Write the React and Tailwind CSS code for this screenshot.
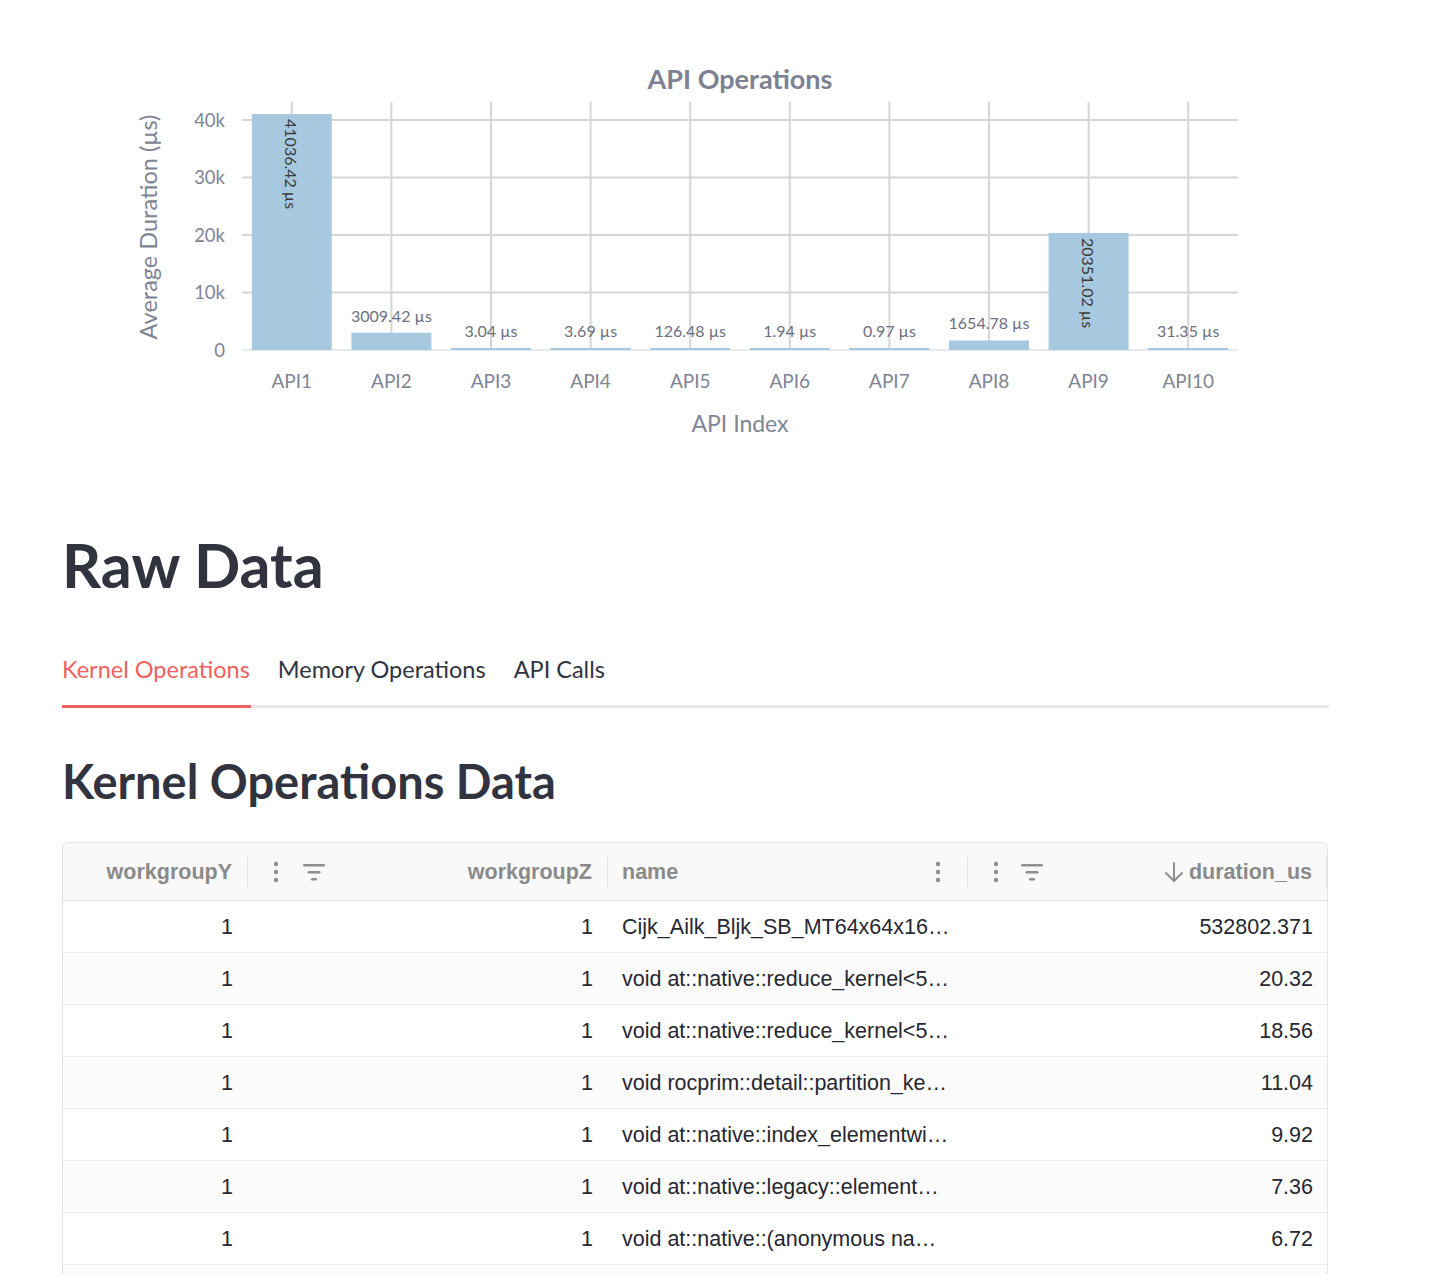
import React from "react";

const apis = [
  { name: "API1", value: 41036.42, label: "41036.42 µs" },
  { name: "API2", value: 3009.42, label: "3009.42 µs" },
  { name: "API3", value: 3.04, label: "3.04 µs" },
  { name: "API4", value: 3.69, label: "3.69 µs" },
  { name: "API5", value: 126.48, label: "126.48 µs" },
  { name: "API6", value: 1.94, label: "1.94 µs" },
  { name: "API7", value: 0.97, label: "0.97 µs" },
  { name: "API8", value: 1654.78, label: "1654.78 µs" },
  { name: "API9", value: 20351.02, label: "20351.02 µs" },
  { name: "API10", value: 31.35, label: "31.35 µs" },
];

// names are shown already cut, as the grid shows them
const rows = [
  ["1", "1", "Cijk_Ailk_Bljk_SB_MT64x64x16…", "532802.371"],
  ["1", "1", "void at::native::reduce_kernel<5…", "20.32"],
  ["1", "1", "void at::native::reduce_kernel<5…", "18.56"],
  ["1", "1", "void rocprim::detail::partition_ke…", "11.04"],
  ["1", "1", "void at::native::index_elementwi…", "9.92"],
  ["1", "1", "void at::native::legacy::element…", "7.36"],
  ["1", "1", "void at::native::(anonymous na…", "6.72"],
];

const SANS = "'Lato', 'Noto Sans', sans-serif";
const TABLE = "'Liberation Sans', Arial, sans-serif";

function Chart() {
  const x0 = 242;
  const x1 = 1238;
  const base = 350;
  const scale = 230 / 40000;
  const band = (x1 - x0) / 10;
  const ticks = [0, 10000, 20000, 30000, 40000];

  return (
    <svg width="1440" height="470" viewBox="0 0 1440 470" style={{ fontFamily: SANS }}>
      <text x="740" y="89" textAnchor="middle" fontSize="27" fontWeight="700" fill="#7d8193">
        API Operations
      </text>

      {apis.map((a, i) => {
        const cx = x0 + band * (i + 0.5);
        return <line key={a.name} x1={cx} x2={cx} y1="102" y2={base} stroke="#d6d6d6" strokeWidth="2" />;
      })}
      {ticks.map((t) => {
        const y = base - t * scale;
        return (
          <g key={t}>
            {t > 0 ? <line x1={x0} x2={x1} y1={y} y2={y} stroke="#d6d6d6" strokeWidth="2" /> : null}
            <text x="225" y={y + 6.5} textAnchor="end" fontSize="18.5" fill="#808495">
              {t === 0 ? "0" : `${t / 1000}k`}
            </text>
          </g>
        );
      })}
      <line x1={x0} x2={x1} y1={base} y2={base} stroke="#e6eaf1" strokeWidth="2" />

      {apis.map((a, i) => {
        const cx = x0 + band * (i + 0.5);
        const h = Math.max(a.value * scale, 2);
        const top = base - h;
        const inside = h > 60;
        return (
          <g key={a.name}>
            <rect x={cx - 40} y={top} width="80" height={h} fill="#a7c9df" />
            {inside ? (
              <text
                x={cx}
                y={top + 5}
                transform={`rotate(90 ${cx} ${top + 5})`}
                dominantBaseline="central"
                fontSize="16"
                fill="#3a3a3a"
              >
                {a.label}
              </text>
            ) : (
              <text x={cx} y={top - 11} textAnchor="middle" fontSize="16" fill="#6b6f80">
                {a.label}
              </text>
            )}
            <text x={cx} y="388" textAnchor="middle" fontSize="19" fill="#808495">
              {a.name}
            </text>
          </g>
        );
      })}

      <text x="740" y="432" textAnchor="middle" fontSize="23" fill="#808495">
        API Index
      </text>
      <text
        x="148"
        y="227"
        transform="rotate(-90 148 227)"
        textAnchor="middle"
        dominantBaseline="central"
        fontSize="23.5"
        fill="#808495"
      >
        Average Duration (µs)
      </text>
    </svg>
  );
}

function Dots() {
  return (
    <svg width="6" height="24" viewBox="0 0 6 24">
      <circle cx="3" cy="4" r="2.2" fill="#8e8e8e" />
      <circle cx="3" cy="12" r="2.2" fill="#8e8e8e" />
      <circle cx="3" cy="20" r="2.2" fill="#8e8e8e" />
    </svg>
  );
}

function FilterIcon() {
  return (
    <svg width="22" height="20" viewBox="0 0 22 20">
      <rect x="0" y="2" width="22" height="2.5" rx="1.2" fill="#8e8e8e" />
      <rect x="4.5" y="9" width="13" height="2.5" rx="1.2" fill="#8e8e8e" />
      <rect x="8" y="16" width="6" height="2.5" rx="1.2" fill="#8e8e8e" />
    </svg>
  );
}

function ArrowDown() {
  return (
    <svg width="20" height="22" viewBox="0 0 20 22" fill="none" stroke="#8e8e8e" strokeWidth="2" strokeLinecap="round" strokeLinejoin="round">
      <line x1="10" y1="2" x2="10" y2="20" />
      <polyline points="2,12 10,20 18,12" />
    </svg>
  );
}

function Sep() {
  return <div className="h-[30px] w-px bg-[#e2e2e2]" />;
}

function DataTable() {
  return (
    <div
      className="w-[1266px] overflow-hidden rounded-t-md border-x border-t border-[#e4e4e4]"
      style={{ fontFamily: TABLE }}
    >
      <div className="grid h-[58px] grid-cols-[185px_360px_360px_359px] border-b border-[#e0e0e0] bg-[#f9f9f9] text-[21.5px] font-bold text-[#8a8a8a]">
        <div className="flex items-center justify-end">
          <span className="pr-[15px]">workgroupY</span>
          <Sep />
        </div>
        <div className="flex items-center">
          <div className="ml-[25px] flex items-center gap-[24px]">
            <Dots />
            <FilterIcon />
          </div>
          <span className="ml-auto pr-[15px]">workgroupZ</span>
          <Sep />
        </div>
        <div className="flex items-center">
          <span className="pl-[14px]">name</span>
          <div className="ml-auto mr-[26px]">
            <Dots />
          </div>
          <Sep />
        </div>
        <div className="flex items-center">
          <div className="ml-[25px] flex items-center gap-[22px]">
            <Dots />
            <FilterIcon />
          </div>
          <span className="ml-auto flex items-center gap-[5px] pr-[14px]">
            <ArrowDown />
            duration_us
          </span>
          <Sep />
        </div>
      </div>
      {rows.map((r, i) => (
        <div
          key={i}
          className={`grid h-[52px] grid-cols-[185px_360px_360px_359px] items-center border-b border-[#ececec] text-[21.5px] text-[#262730] ${
            i % 2 === 1 ? "bg-[#fbfbfb]" : "bg-white"
          }`}
        >
          <div className="pr-[15px] text-right">{r[0]}</div>
          <div className="pr-[15px] text-right">{r[1]}</div>
          <div className="whitespace-nowrap pl-[14px]">{r[2]}</div>
          <div className="pr-[14px] text-right">{r[3]}</div>
        </div>
      ))}
      <div className="h-[20px] bg-[#fbfbfb]" />
    </div>
  );
}

export default function App() {
  return (
    <div className="h-[1274px] overflow-hidden bg-white">
      <Chart />
      <div className="pl-[62px]" style={{ fontFamily: SANS }}>
        <h1 className="mt-[64px] text-[61px] font-bold leading-none text-[#31333f]">Raw Data</h1>

        <div className="mt-[57px] w-[1267px]">
          <div className="flex gap-[28px] text-[23.5px] text-[#31333f]">
            <span className="text-[#f0605d]">Kernel Operations</span>
            <span>Memory Operations</span>
            <span>API Calls</span>
          </div>
          <div className="mt-[18px] flex h-[3px]">
            <div className="w-[189px] bg-[#f0605d]" />
            <div className="flex-1 bg-[#e8e8e8]" />
          </div>
        </div>

        <h2 className="mt-[50px] text-[47px] font-bold leading-none text-[#31333f]">Kernel Operations Data</h2>

        <div className="mt-[37px]">
          <DataTable />
        </div>
      </div>
    </div>
  );
}
